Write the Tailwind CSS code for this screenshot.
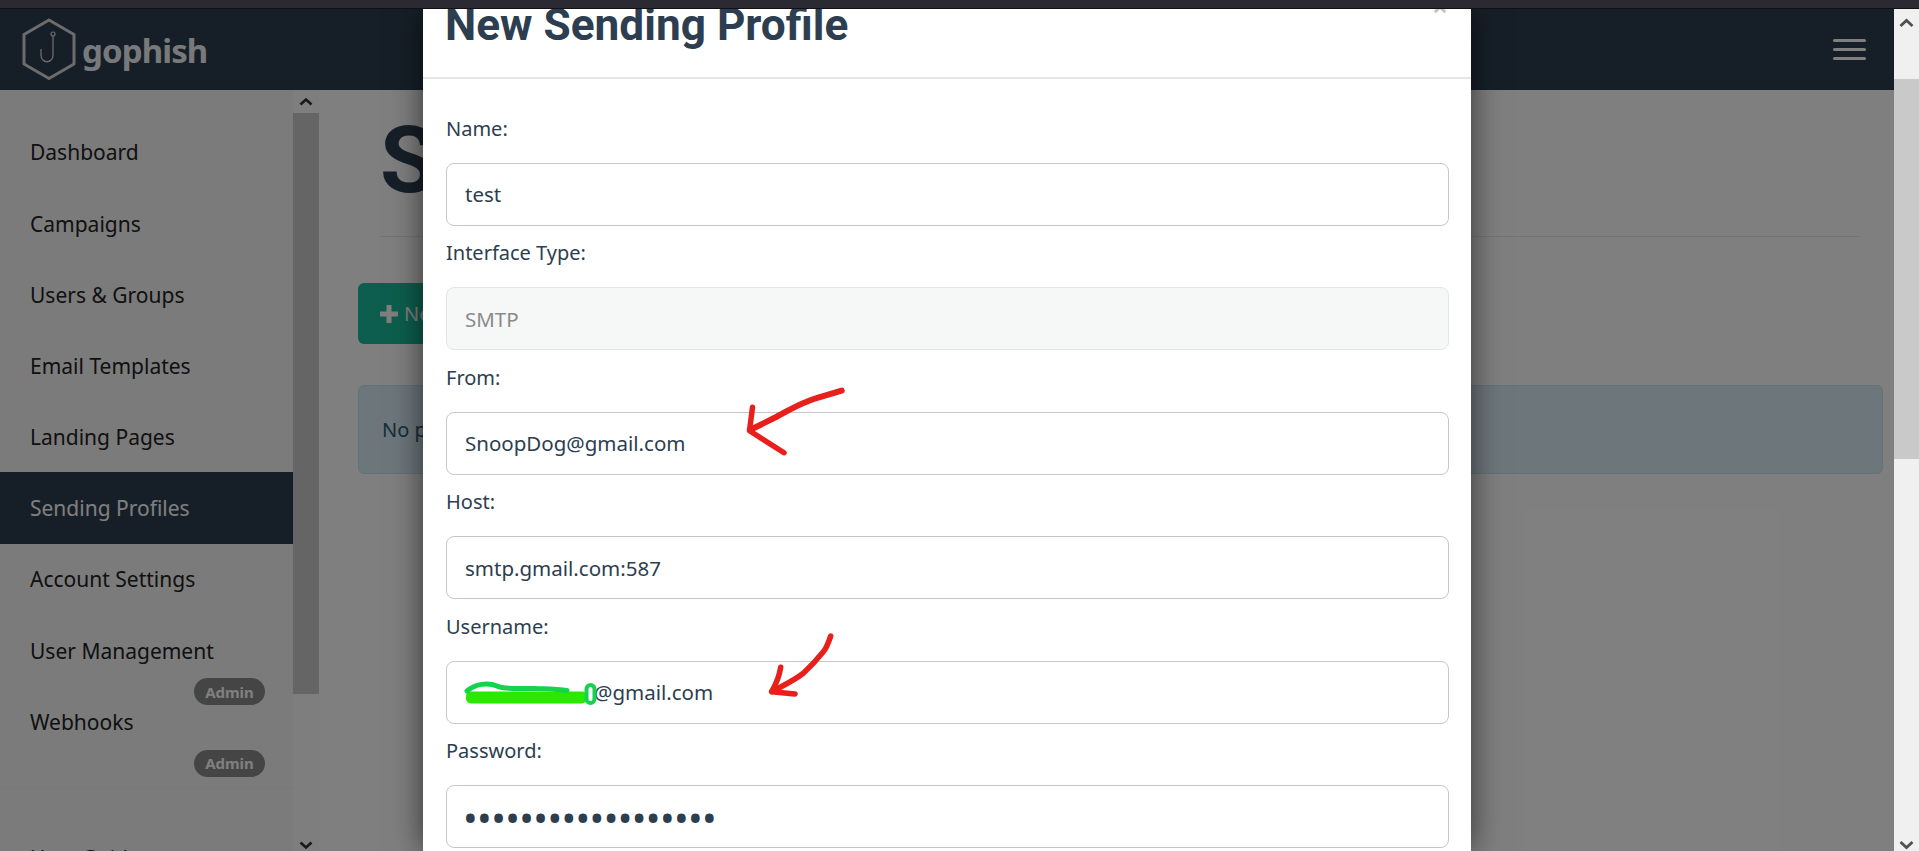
<!DOCTYPE html>
<html lang="en">
  <head>
    <title>Gophish - Sending Profiles</title>
    <meta charset="utf-8">
    <meta name="viewport" content="width=device-width, initial-scale=1.0">
    <script src="https://cdn.jsdelivr.net/npm/@tailwindcss/browser@4"></script>
  </head>
  <body class="h-screen overflow-hidden flex flex-col bg-white font-['Noto_Sans',sans-serif] text-[#2c3e50]">
    <div class="h-[9px] shrink-0 bg-[#2b2a33] border-b border-[#111]"></div>

    <div class="flex flex-1 min-h-0">
      <div class="relative flex-1 min-w-0 overflow-hidden flex flex-col">
        <!-- navbar -->
        <header class="h-[81px] shrink-0 bg-[#2c3e50] flex items-center justify-between pr-[28px]">
          <div class="flex items-center">
            <svg class="ml-[22px] -mt-[1px]" width="56" height="64" viewBox="22 14 56 64" fill="none">
              <path d="M49 17 L74 31.5 L74 61 L49 75.5 L24 61 L24 31.5 Z" stroke="#d8d8d8" stroke-width="3" stroke-linejoin="round"/>
              <circle cx="53" cy="31" r="2" stroke="#d8d8d8" stroke-width="1.2"/>
              <path d="M53 33 V52 C53 61 41 61 41 52 V46" stroke="#d8d8d8" stroke-width="1.3"/>
            </svg>
            <span class="ml-[4px] mt-[1px] text-[33px] leading-none font-bold tracking-[-0.9px] text-white/95">gophish</span>
          </div>
          <div class="flex flex-col gap-[6px]">
            <span class="block w-[33px] h-[3px] rounded-sm bg-white"></span>
            <span class="block w-[33px] h-[3px] rounded-sm bg-white"></span>
            <span class="block w-[33px] h-[3px] rounded-sm bg-white"></span>
          </div>
        </header>

        <div class="flex flex-1 min-h-0">
          <!-- sidebar -->
          <aside class="w-[293px] shrink-0 bg-[#f6f6f6] overflow-hidden pt-[26.5px] text-[21px] text-[#222]">
            <div class="h-[71.2px] pl-[30px] pt-[2px] flex items-center">Dashboard</div>
            <div class="h-[71.2px] pl-[30px] pt-[2px] flex items-center">Campaigns</div>
            <div class="h-[71.2px] pl-[30px] pt-[2px] flex items-center">Users &amp; Groups</div>
            <div class="h-[71.2px] pl-[30px] pt-[2px] flex items-center">Email Templates</div>
            <div class="h-[71.2px] pl-[30px] pt-[2px] flex items-center">Landing Pages</div>
            <div class="h-[71.2px] pl-[30px] pt-[2px] flex items-center bg-[#2c3e50] text-white">Sending Profiles</div>
            <div class="h-[71.2px] pl-[30px] pt-[2px] flex items-center">Account Settings</div>
            <div class="relative h-[71.2px] pl-[30px] pt-[2px] flex items-center">
              User Management
              <span class="absolute left-[194px] top-[63.5px] w-[71px] h-[27px] rounded-full bg-[#8a8a8a] text-white text-[15px] font-bold flex items-center justify-center">Admin</span>
            </div>
            <div class="relative h-[71.2px] pl-[30px] pt-[2px] flex items-center">
              Webhooks
              <span class="absolute left-[194px] top-[63.5px] w-[71px] h-[27px] rounded-full bg-[#8a8a8a] text-white text-[15px] font-bold flex items-center justify-center">Admin</span>
            </div>
            <div class="mt-[30px] border-t border-[#f0f0f0] pt-[36px] h-[107px] pl-[30px] flex items-center">User Guide</div>
          </aside>

          <!-- sidebar scrollbar -->
          <div class="w-[26px] shrink-0 bg-[#fcfcfc] flex flex-col">
            <div class="h-[23px] flex items-center justify-center">
              <svg width="14" height="9" viewBox="0 0 14 9" fill="none"><path d="M1.5 7.5 L7 2.5 L12.5 7.5" stroke="#333" stroke-width="2.6"/></svg>
            </div>
            <div class="h-[581px] bg-[#cbcbcb]"></div>
            <div class="flex-1 flex items-end justify-center pb-[1px]">
              <svg width="14" height="9" viewBox="0 0 14 9" fill="none"><path d="M1.5 1.5 L7 6.5 L12.5 1.5" stroke="#333" stroke-width="2.6"/></svg>
            </div>
          </div>

          <!-- page content -->
          <main class="flex-1 min-w-0 bg-white pl-[39px] pr-[11px]">
            <div class="h-[147px] ml-[22px] mr-[23px] border-b border-[#e8e8e8] flex items-center pb-[4px]">
              <h1 class="font-['Roboto',sans-serif] font-bold text-[92px] leading-none text-[#2c3e50] whitespace-nowrap">Sending Profiles</h1>
            </div>
            <button class="mt-[46px] h-[61px] w-[220px] rounded-[6px] bg-[#1abc9c] text-white text-[20px] flex items-center pl-[22px] gap-[6px]">
              <svg width="18" height="18" viewBox="0 0 18 18"><path d="M6.5 0H11.5V6.5H18V11.5H11.5V18H6.5V11.5H0V6.5H6.5Z" fill="#fff"/></svg>
              New Profile
            </button>
            <div class="mt-[41px] h-[89px] rounded-[6px] border border-[#bce8f1] bg-[#d9edf7] pl-[23px] flex items-center text-[20px] text-[#2c5a70]">No profiles created yet</div>
          </main>
        </div>

        <!-- modal backdrop -->
        <div class="absolute inset-0 bg-black/50"></div>

        <!-- modal -->
        <div class="absolute left-[423px] top-0 bottom-0 w-[1048px] bg-white overflow-hidden shadow-[0_0_30px_rgba(0,0,0,0.6)]">
          <div class="relative h-[70px] flow-root border-b-2 border-[#e6e6e6] pl-[22px]">
            <h2 class="font-['Roboto',sans-serif] font-bold text-[44.2px] leading-none -mt-[6px] text-[#2c3e50]">New Sending Profile</h2>
            <span class="absolute right-[23px] -top-[17px] text-[28px] leading-none font-bold text-[#c4c4c4]">×</span>
          </div>
          <form class="pl-[23px] pr-[22px] pt-[22px] text-[20px]">
            <label class="h-[61.5px] flex items-center pb-[6px]">Name:</label>
            <input value="test" class="block w-full h-[63px] rounded-[8px] border border-[#c4c8cc] pl-[18px] text-[20.5px]">
            <label class="h-[61.5px] flex items-center pb-[6px]">Interface Type:</label>
            <input value="SMTP" disabled class="block w-full h-[63px] rounded-[8px] border border-[#e3e6e6] bg-[#f6f7f7] pl-[18px] text-[20.5px] text-[#8a8a8a]">
            <label class="h-[61.5px] flex items-center pb-[6px]">From:</label>
            <input value="SnoopDog@gmail.com" class="block w-full h-[63px] rounded-[8px] border border-[#c4c8cc] pl-[18px] text-[20.5px]">
            <label class="h-[61.5px] flex items-center pb-[6px]">Host:</label>
            <input value="smtp.gmail.com:587" class="block w-full h-[63px] rounded-[8px] border border-[#c4c8cc] pl-[18px] text-[20.5px]">
            <label class="h-[61.5px] flex items-center pb-[6px]">Username:</label>
            <input value="@gmail.com" class="block w-full h-[63px] rounded-[8px] border border-[#c4c8cc] pl-[147px] text-[20.5px]">
            <label class="h-[61.5px] flex items-center pb-[6px]">Password:</label>
            <input type="password" value="aaaaaaaaaaaaaaaaaa" class="block w-full h-[63px] rounded-[8px] border border-[#c4c8cc] pl-[16px] text-[39px] tracking-[-0.6px]">
          </form>
        </div>

        <!-- red arrows and green scribble drawn on the screenshot -->
        <svg class="absolute left-0 top-[-9px] pointer-events-none" width="1894" height="851" fill="none">
          <path d="M841.7 390.7 C825 396 815 398 806.7 401.7 C795 406 786 412 776.7 416.7 L750 430" stroke="#e8201c" stroke-width="6" stroke-linecap="round"/>
          <path d="M752.5 407.3 L749.5 430.7 L784 452.7" stroke="#e8201c" stroke-width="5.5" stroke-linecap="round" stroke-linejoin="round"/>
          <path d="M830.7 636 C828 644 825 650 823.3 651.7 C815 662 810 667 803.3 673.3 C792 682 782 686 771.7 691.7" stroke="#e8201c" stroke-width="5.5" stroke-linecap="round"/>
          <path d="M780.7 667.3 C779 678 775 686 771.7 691.7 L795 694" stroke="#e8201c" stroke-width="5.5" stroke-linecap="round" stroke-linejoin="round"/>
          <rect x="466" y="691.5" width="121" height="12" rx="5" fill="#2be800"/>
          <path d="M467 691 C475 684 488 682 497 686 C505 690 520 688 535 688.5 C545 689 556 689 567 690.5" stroke="#16d24e" stroke-width="5" stroke-linecap="round"/>
          <rect x="586.5" y="685" width="8" height="18" rx="4" stroke="#16d24e" stroke-width="4"/>
        </svg>
      </div>

      <!-- page scrollbar -->
      <div class="w-[25px] shrink-0 bg-[#f0f0f0] flex flex-col">
        <div class="h-[70px] pt-[9px] flex justify-center">
          <svg width="15" height="10" viewBox="0 0 15 10" fill="none"><path d="M1.5 8 L7.5 2.5 L13.5 8" stroke="#505050" stroke-width="2.8"/></svg>
        </div>
        <div class="h-[380px] bg-[#c9c9c9]"></div>
        <div class="flex-1 flex items-end justify-center pb-[1px]">
          <svg width="15" height="10" viewBox="0 0 15 10" fill="none"><path d="M1.5 2 L7.5 7.5 L13.5 2" stroke="#505050" stroke-width="2.8"/></svg>
        </div>
      </div>
    </div>
  </body>
</html>
